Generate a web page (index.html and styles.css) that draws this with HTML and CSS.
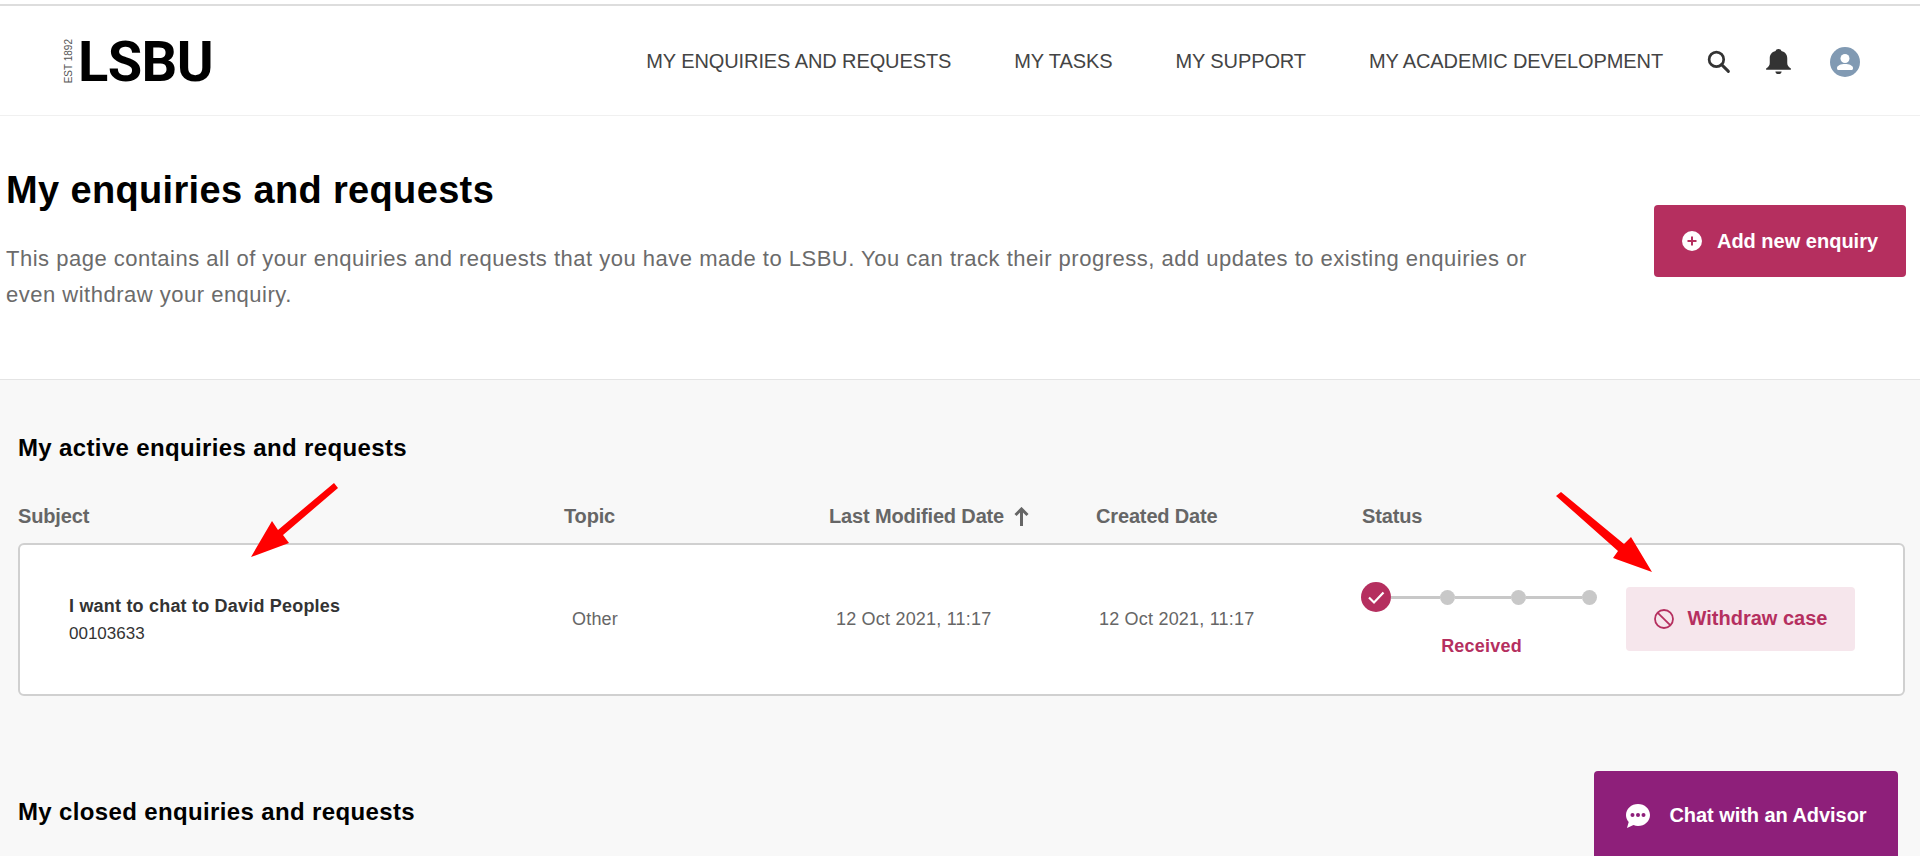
FILE: index.html
```html
<!DOCTYPE html>
<html lang="en">
<head>
  <meta charset="UTF-8" />
  <meta name="viewport" content="width=device-width, initial-scale=1.0"/>
  <title>My enquiries and requests - LSBU</title>
  <link rel="stylesheet" href="styles.css">
</head>
<body>

  <header class="site-header">
    <a href="#" class="logo">
      <span class="logo-est">EST 1892</span>
      <span class="logo-name">LSBU</span>
    </a>
    <nav class="main-nav">
      <a href="#">MY ENQUIRIES AND REQUESTS</a>
      <a href="#">MY TASKS</a>
      <a href="#">MY SUPPORT</a>
      <a href="#">MY ACADEMIC DEVELOPMENT</a>
    </nav>
    <div class="header-icons">
      <svg class="icon-search" viewBox="0 0 24 24"><circle cx="10" cy="10" r="7" fill="none" stroke="#333" stroke-width="2.6"/><path d="M15 15l6.5 6.5" stroke="#333" stroke-width="2.8" stroke-linecap="round"/></svg>
      <svg class="icon-bell" viewBox="3 1 20 24" preserveAspectRatio="none"><path fill="#333" d="M13 1c-1.300 0-2.200.9-2.300 2C7.500 3.900 6 6.700 6 10v4.500c0 2.500-1.100 3.800-2.600 5-.8.7-.4 1.500.5 1.500h18.200c.9 0 1.300-.8.500-1.500-1.500-1.200-2.600-2.500-2.600-5V10c0-3.300-1.500-6.100-4.700-7-.1-1.100-1-2-2.300-2zM10.500 22.500h5c0 1.500-1.100 2.500-2.500 2.500s-2.500-1-2.500-2.500z"/></svg>
      <svg class="icon-user" viewBox="0 0 30 30"><circle cx="15" cy="15" r="15" fill="#819ab3"/><circle cx="15" cy="11.500" r="4.500" fill="#fff"/><path fill="#fff" d="M7 21c0-2.500 4-4 8-4s8 1.500 8 4v.5c0 .8-.6 1.500-1.500 1.500h-13C7.600 23 7 22.300 7 21.500z"/></svg>
    </div>
  </header>

  <section class="intro">
    <div class="intro-text">
      <h1>My enquiries and requests</h1>
      <p>This page contains all of your enquiries and requests that you have made to LSBU. You can track their progress, add updates to existing enquiries or even withdraw your enquiry.</p>
    </div>
    <a href="#" class="btn-add">
      <svg viewBox="0 0 20 20"><circle cx="10" cy="10" r="10" fill="#fff"/><path d="M10 5.500v9M5.500 10h9" stroke="#b52f5f" stroke-width="2"/></svg>
      Add new enquiry
    </a>
  </section>

  <main class="cases">
    <h2>My active enquiries and requests</h2>

    <div class="table-head">
      <span class="col-subject">Subject</span>
      <span class="col-topic">Topic</span>
      <span class="col-modified">Last Modified Date <svg viewBox="0 0 15 19"><path d="M7.500 19V2M1.500 8l6-6 6 6" fill="none" stroke="#666" stroke-width="3"/></svg></span>
      <span class="col-created">Created Date</span>
      <span class="col-status">Status</span>
    </div>

    <div class="case-row">
      <div class="col-subject case-subject">
        <strong>I want to chat to David Peoples</strong>
        <span>00103633</span>
      </div>
      <div class="col-topic">Other</div>
      <div class="col-modified">12 Oct 2021, 11:17</div>
      <div class="col-created">12 Oct 2021, 11:17</div>
      <div class="col-status">
        <div class="stepper">
          <span class="step-done">
            <svg viewBox="0 0 30 30"><path d="M8 15.500l5 5 9.500-10" fill="none" stroke="#fff" stroke-width="2.200"/></svg>
          </span>
          <span class="step-line step-line-first"></span>
          <span class="step-dot"></span>
          <span class="step-line"></span>
          <span class="step-dot"></span>
          <span class="step-line"></span>
          <span class="step-dot"></span>
        </div>
        <div class="step-label">Received</div>
      </div>
      <a href="#" class="btn-withdraw">
        <svg viewBox="0 0 20 20"><circle cx="10" cy="10" r="9" fill="none" stroke="#b52f5f" stroke-width="1.800"/><path d="M3.800 3.800l12.400 12.400" stroke="#b52f5f" stroke-width="1.800"/></svg>
        Withdraw case
      </a>
    </div>

    <h2 class="closed-title">My closed enquiries and requests</h2>
  </main>

  <a href="#" class="btn-chat">
    <svg viewBox="0 0 26 26"><path fill="#fff" d="M13 1C6.400 1 1 5.900 1 12c0 2.600 1 5 2.700 6.900L2 25l6.500-2.900c1.400.6 2.900.9 4.500.9 6.600 0 12-4.900 12-11S19.600 1 13 1z"/><circle cx="7.500" cy="12" r="2" fill="#8e1f7a"/><circle cx="13" cy="12" r="2" fill="#8e1f7a"/><circle cx="18.500" cy="12" r="2" fill="#8e1f7a"/></svg>
    Chat with an Advisor
  </a>

  <!-- Red annotation arrows drawn over the page -->
  <svg class="annotations" viewBox="0 0 1920 856">
    <path fill="#f00" d="M334 483L338 488 283 535 289 543 251 557 272 521 278 530z"/>
    <path fill="#f00" d="M1561 492L1556 496 1618 551 1613 558 1652 572 1631 537 1624 544z"/>
  </svg>

</body>
</html>
```

FILE: styles.css
```css
:root {
  --primary: #b52f5f;
  --text: #666;
  --dark: #333;
  --border: #d0d0d0;
}

html, body {
  height: 100%;
}

body {
  margin: 0;
  font-family: 'Liberation Sans', Arial, sans-serif;
  color: var(--text);
  background: #fff;
  overflow: hidden;
  position: relative;
}

a {
  text-decoration: none;
}

/* Header */
.site-header {
  height: 107px;
  margin-top: 4px;
  border-top: 2px solid #ddd;
  border-bottom: 1px solid #f0f0f0;
  display: flex;
  align-items: center;
  padding: 2px 60px 0 63px;
}

.logo {
  display: flex;
  align-items: center;
  color: #000;
  margin-right: auto;
}

.logo-est {
  writing-mode: vertical-rl;
  transform: rotate(180deg);
  font-size: 10px;
  color: #555;
  white-space: nowrap;
  margin-right: 4px;
}

.logo-name {
  font-family: 'Roboto', sans-serif;
  font-weight: 700;
  font-size: 56px;
  line-height: 46px;
  letter-spacing: -0.6px;
}

.main-nav {
  display: flex;
  gap: 63px;
}

.main-nav a {
  color: #444;
  font-size: 20px;
  letter-spacing: -0.1px;
}

.header-icons {
  display: flex;
  align-items: center;
  margin-left: 43px;
}

.icon-search {
  width: 25px;
  height: 25px;
}

.icon-bell {
  width: 25px;
  height: 25px;
  margin-left: 35px;
}

.icon-user {
  width: 30px;
  height: 30px;
  margin-left: 39px;
}

/* Intro block */
.intro {
  height: 264px;
  display: flex;
  justify-content: space-between;
  align-items: flex-start;
  padding: 0 14px 0 6px;
  border-bottom: 1px solid #e4e4e4;
  box-sizing: border-box;
}

.intro-text {
  width: 1560px;
}

.intro h1 {
  margin: 51px 0 0;
  color: #000;
  font-size: 38px;
  line-height: 46px;
  letter-spacing: 0.35px;
}

.intro p {
  margin: 28px 0 0;
  font-size: 22px;
  line-height: 36px;
  letter-spacing: 0.5px;
  color: #6b6b6b;
}

.btn-add {
  margin-top: 89px;
  width: 252px;
  height: 72px;
  background: var(--primary);
  color: #fff;
  border-radius: 4px;
  display: flex;
  align-items: center;
  justify-content: center;
  gap: 15px;
  font-weight: bold;
  font-size: 20px;
}

.btn-add svg {
  width: 20px;
  height: 20px;
}

/* Cases */
.cases {
  background: #f8f8f8;
  padding: 53px 15px 200px 18px;
}

.cases h2 {
  margin: 0;
  color: #000;
  font-size: 24px;
  line-height: 30px;
  letter-spacing: 0.36px;
}

.table-head {
  display: flex;
  align-items: center;
  margin-top: 40px;
  height: 26px;
  font-weight: bold;
  font-size: 20px;
  letter-spacing: -0.15px;
}

.table-head svg {
  width: 15px;
  height: 19px;
  margin-left: 4px;
  vertical-align: -3px;
}

.table-head .col-subject { width: 546px; }
.table-head .col-topic { width: 265px; }
.table-head .col-modified { width: 267px; }
.table-head .col-created { width: 266px; }

.case-row {
  margin-top: 14px;
  height: 153px;
  box-sizing: border-box;
  background: #fff;
  border: 2px solid var(--border);
  border-radius: 6px;
  display: flex;
  align-items: center;
  font-size: 18px;
  letter-spacing: 0.2px;
}

.case-row .col-subject { width: 503px; margin-left: 49px; }
.case-row .col-topic { width: 264px; }
.case-row .col-modified { width: 263px; }
.case-row .col-created { width: 262px; }

.case-subject strong {
  display: block;
  color: var(--dark);
  margin-top: 1px;
}

.case-subject span {
  display: block;
  margin-top: 7px;
  color: var(--dark);
  font-size: 17px;
  letter-spacing: 0;
}

.case-row .col-status {
  width: 265px;
}

.stepper {
  display: flex;
  align-items: center;
  margin-bottom: 24px;
}

.step-done {
  width: 30px;
  height: 30px;
  border-radius: 50%;
  background: var(--primary);
}

.step-done svg {
  display: block;
  width: 30px;
  height: 30px;
}

.step-line {
  width: 56px;
  height: 3px;
  background: #c8c8c8;
}

.step-line-first {
  width: 49px;
}

.step-dot {
  width: 15px;
  height: 15px;
  border-radius: 50%;
  background: #c8c8c8;
}

.step-label {
  text-align: center;
  width: 241px;
  color: var(--primary);
  font-weight: bold;
}

.btn-withdraw {
  width: 229px;
  height: 64px;
  margin-bottom: 2px;
  background: #f6e6ec;
  border-radius: 4px;
  color: var(--primary);
  display: flex;
  align-items: center;
  justify-content: center;
  gap: 14px;
  font-weight: bold;
  font-size: 20px;
  letter-spacing: 0;
}

.btn-withdraw svg {
  width: 20px;
  height: 20px;
}

.cases .closed-title {
  margin-top: 101px;
}

/* Chat button sits over the page */
.btn-chat {
  position: fixed;
  right: 22px;
  bottom: 0;
  width: 304px;
  height: 85px;
  background: #8e1f7a;
  color: #fff;
  border-radius: 4px 4px 0 0;
  display: flex;
  align-items: center;
  justify-content: center;
  gap: 18px;
  padding-top: 4px;
  box-sizing: border-box;
  font-weight: bold;
  font-size: 20px;
  letter-spacing: -0.05px;
}

.btn-chat svg {
  width: 26px;
  height: 26px;
}

.annotations {
  position: absolute;
  top: 0;
  left: 0;
  width: 1920px;
  height: 856px;
  pointer-events: none;
}
```
